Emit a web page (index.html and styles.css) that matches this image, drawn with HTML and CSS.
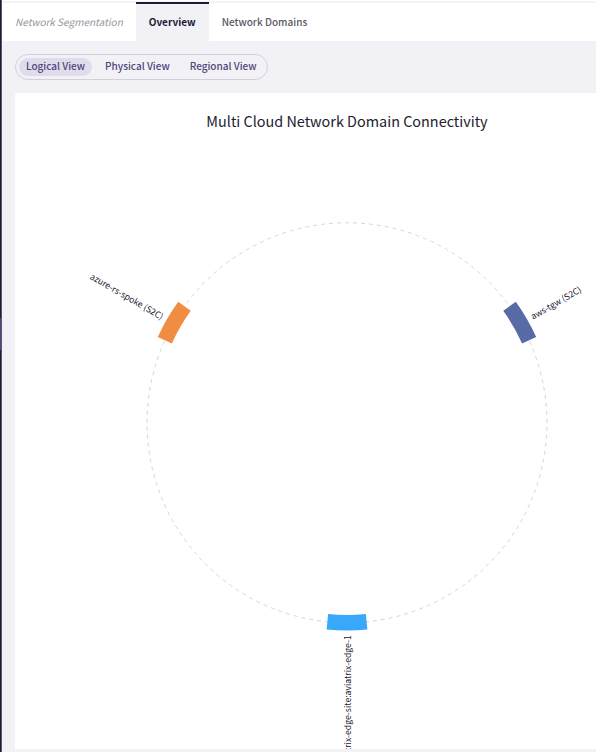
FILE: index.html
```html
<!DOCTYPE html>
<html lang="en">
<head>
<meta charset="utf-8">
<title>Network Segmentation</title>
<link rel="stylesheet" href="styles.css">
</head>
<body>
<div class="app">
  <div class="rail"><div class="rail-active"></div></div>
  <div class="page">
    <header class="topbar">
      <h1 class="page-title">Network Segmentation</h1>
      <nav class="tabs">
        <a class="tab tab-current" href="#overview" aria-current="page">Overview</a>
        <a class="tab" href="#domains">Network Domains</a>
      </nav>
    </header>
    <main class="content">
      <div class="switch">
        <button class="option option-on" type="button">Logical View</button>
        <button class="option" type="button">Physical View</button>
        <button class="option" type="button">Regional View</button>
      </div>
      <section class="card">
        <svg class="chart" viewBox="-259 -343 518 682">
          <text class="chart-title" y="-308">Multi Cloud Network Domain Connectivity</text>
          <circle class="ring" r="208" transform="rotate(-90)"/>
          <g transform="rotate(-30)">
            <path class="arc-aws" d="M199 -19.6A200 200 0 0 1 199 19.6L215 21.2A216 216 0 0 0 215 -21.2Z"/>
            <text class="label" x="221" y="4">aws-tgw (S2C)</text>
          </g>
          <g transform="rotate(90)">
            <path class="arc-edge" d="M199 -19.6A200 200 0 0 1 199 19.6L215 21.2A216 216 0 0 0 215 -21.2Z"/>
            <text class="label label-end" x="-221" y="4" transform="rotate(180)">aviatrix-edge-site:aviatrix-edge-1</text>
          </g>
          <g transform="rotate(210)">
            <path class="arc-azure" d="M199 -19.6A200 200 0 0 1 199 19.6L215 21.2A216 216 0 0 0 215 -21.2Z"/>
            <text class="label label-end" x="-221" y="4" transform="rotate(180)">azure-rs-spoke (S2C)</text>
          </g>
        </svg>
      </section>
    </main>
  </div>
</div>
</body>
</html>
```
FILE: styles.css
```css
* { box-sizing: border-box; }

body {
  margin: 0;
  font-family: "Noto Sans CJK SC", "Noto Sans", sans-serif;
  font-size: 10px;
  line-height: 16px;
  color: #22202e;
  background: #f2f1f6;
}

.app {
  display: flex;
  height: 100vh;
  overflow: hidden;
}

.rail {
  flex: 0 0 2px;
  padding-top: 318px;
  background: #211936;
  border-right: 1px solid #5c566c;
}

.rail-active {
  height: 32px;
  background: #54467c;
}

.page {
  flex: 1;
  min-width: 0;
  display: flex;
  flex-direction: column;
}

.topbar {
  display: flex;
  height: 41px;
  padding-top: 2px;
  background: linear-gradient(#ffffff 1px, #f4f4f6 1px, #f4f4f6 3px, #ffffff 3px);
}

.page-title {
  margin: 0;
  padding: 12px 13px 0;
  font-size: 10px;
  line-height: 16px;
  font-weight: 400;
  font-style: italic;
  color: #96959c;
  white-space: nowrap;
}

.tabs { display: flex; }

.tab {
  padding: 10px 13px 0;
  border-top: 2px solid transparent;
  font-weight: 500;
  color: #5b5966;
  text-decoration: none;
  white-space: nowrap;
}

.tab-current {
  background: #f2f1f6;
  border-top-color: #211936;
  color: #211936;
  font-weight: 700;
}

.content {
  flex: 1;
  min-height: 0;
  display: flex;
  flex-direction: column;
  align-items: flex-start;
  gap: 13px;
  padding: 13px 0 3px 13px;
}

.switch {
  display: flex;
  gap: 6px;
  padding: 3px;
  border: 1px solid #d3d0dc;
  border-radius: 13px;
}

.option {
  padding: 0 7px 2px;
  border: 0;
  border-radius: 9px;
  background: transparent;
  font: inherit;
  font-weight: 500;
  color: #51457a;
  white-space: nowrap;
}

.option-on { background: #e0dcec; }

.card {
  flex: 1;
  min-height: 0;
  align-self: stretch;
  padding-left: 83px;
  overflow: hidden;
  background: #ffffff;
  border-radius: 3px 0 0 0;
}

.chart {
  display: block;
  width: 100%;
  overflow: visible;
}

.chart-title {
  font-size: 15px;
  text-anchor: middle;
  fill: #22202e;
}

.ring {
  fill: none;
  stroke: #d6d6d8;
  stroke-dasharray: 4 4;
  stroke-dashoffset: 2px;
  vector-effect: non-scaling-stroke;
}

.arc-aws { fill: #596ba7; }
.arc-edge { fill: #38a8fb; }
.arc-azure { fill: #f18c43; }

.label {
  font-size: 9px;
  fill: #22202e;
}

.label-end { text-anchor: end; }
```
